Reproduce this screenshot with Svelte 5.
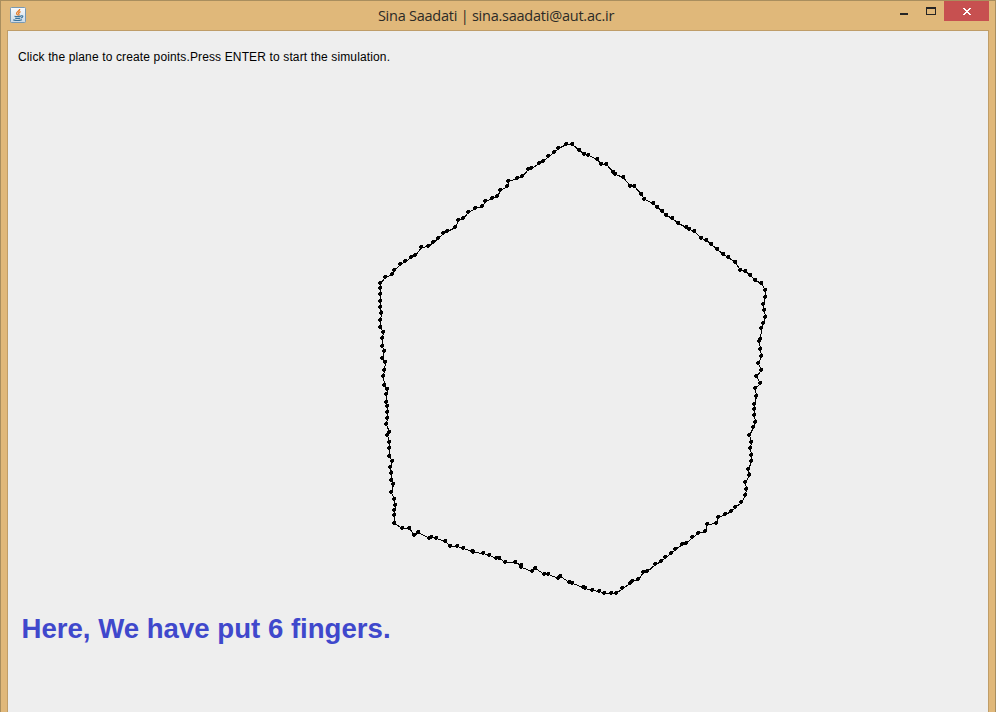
<script>
  const outline = `380,283 385,277 392,274 394,270 400,264 405,261 411,257 415,255 421,247 428,246 433,242 438,238 443,233 447,231 455,227 458,220 463,218 468,212
475,208 482,206 485,201 492,198 497,196 500,190 507,186 508,181 517,178 522,176 528,169 531,168 539,163 543,161 548,156 554,152 558,148 566,144 572,144 579,150 584,154 588,155 597,159 601,164 606,164 613,172 615,174 623,177
630,186 634,186 641,194 644,199 653,203 657,207 662,211 666,215 672,218 678,223 686,227 689,229 694,231 701,238 706,240 711,244 717,249 723,254 728,257 735,262 740,270 745,271 750,275 755,280 761,283 765,290 765,297
763,304 764,310 765,317 763,323 761,328 760,339 759,341 760,349 761,356 758,363 761,370 756,376 760,383 755,388 756,396 754,404 754,409 754,415 755,422 753,427 749,435 751,442 750,448 751,455 751,461 748,469 749,475 745,482 746,489 745,495 741,502 735,507
731,511 725,514 718,517 716,523 707,524 705,531 698,533 692,537 686,543 682,544 675,549 671,553 665,557 661,561 655,564 647,571 643,572 638,579 632,581 630,583 622,588 616,593 611,593 604,593 599,591 592,590 585,588 583,587 572,583 569,582
560,576 558,578 548,574 544,574 535,568 532,571 521,567 521,565 515,562 505,562 499,558 496,558 489,555 483,553 473,552 472,551 463,548 457,546 450,546 445,541 436,538 431,537 429,538 418,532 414,535 409,528 402,528
394,523 394,515 394,510 395,505 394,499 391,492 393,484 391,480 391,473 390,467 392,461 389,456 389,448 389,442 387,435 389,432 386,424 387,418 387,412 387,406 386,402 386,394 387,389 384,385 383,376 384,370 385,362 382,358 384,351 382,346 382,338 383,332 380,327 380,320 381,313 380,307 380,301 380,294 380,288`;
  const points = outline.trim().split(/\s+/).map((p) => p.split(',').map(Number));
  const line = points.map(([x, y]) => `${x + 0.5},${y + 0.5}`).join(' ');
  // Each marker is a 4px disc with clipped corners.
  const dots = points.map(([x, y]) => `M${x - 1} ${y - 2}h3v3h-1v1h-2v-1h-1v-2h1z`).join('');
</script>

<div class="window">
  <header>
    <svg class="java" width="16" height="16" viewBox="0 0 16 16">
      <defs>
        <linearGradient id="tile" x1="0" y1="0" x2="0" y2="1">
          <stop offset="0" stop-color="#fafbfc" />
          <stop offset="1" stop-color="#cbd9e5" />
        </linearGradient>
      </defs>
      <rect x=".5" y=".5" width="15" height="15" rx="1" fill="url(#tile)" stroke="#7899b3" />
      <path d="M9.7 2C10 4 6.4 4.5 6.6 6.4Q6.7 7.2 7.7 8.2M10.6 4.6C8.5 5.6 8.2 6.2 9 7.1Q9.3 7.8 8.5 8.6" fill="none" stroke="#e77922" stroke-width="1.3" />
      <path d="M4.5 9.2Q7 10 11 9.2M5.2 11.1Q7.5 11.9 10.2 11.1M3.3 12.9Q7.5 14.2 12 12.7M11 8.8Q13.7 8.4 12.4 10.1Q11.8 10.8 10.8 11" fill="none" stroke="#39739c" stroke-width="1.2" />
    </svg>
    <h1>Sina Saadati | sina.saadati@aut.ac.ir</h1>
    <div class="controls">
      <svg width="64" height="20" viewBox="0 0 64 20" shape-rendering="crispEdges">
        <path d="M20 12h8v2h-8z" fill="#252525" />
        <path fill-rule="evenodd" d="M46 6h10v8H46zM47 8v5h8V8z" fill="#252525" />
      </svg>
      <button aria-label="Close">
        <svg width="8" height="7" viewBox="0 0 8 7" shape-rendering="crispEdges">
          <path d="M0 0h2v1h1v1h2V1h1V0h2v1H7v1H6v1H5v1h1v1h1v1h1v1H6V6H5V5H3v1H2v1H0V6h1V5h1V4h1V3H2V2H1V1H0z" fill="#fff" />
        </svg>
      </button>
    </div>
  </header>
  <main>
    <p class="hint">Click the plane to create points.Press ENTER to start the simulation.</p>
    <svg class="plane" width="980" height="681" viewBox="8 31 980 681" shape-rendering="crispEdges">
      <polygon points={line} fill="none" stroke="#000" stroke-width="1" />
      <path d={dots} fill="#000" />
    </svg>
    <p class="caption">Here, We have put 6 fingers.</p>
  </main>
</div>

<style>
  :global(body) { margin: 0; overflow: hidden; }
  .window {
    box-sizing: border-box;
    width: 996px;
    height: 712px;
    display: flex;
    flex-direction: column;
    background: #e0b87a;
    border: 1px solid #a98e5e;
    border-bottom: 0;
    padding: 0 6px;
  }
  header {
    height: 29px;
    flex: none;
    display: grid;
    grid-template-columns: 110px 1fr 114px;
    align-items: start;
  }
  .java { margin: 6px 0 0 3px; display: block; }
  h1 {
    margin: 4px 0 0;
    font: 400 14.5px/22px "Open Sans", "Noto Sans", sans-serif;
    color: #2b2a27;
    text-align: center;
    white-space: nowrap;
    letter-spacing: -0.24px;
  }
  .controls { display: flex; justify-content: flex-end; }
  button {
    width: 45px;
    height: 20px;
    border: 0;
    padding: 1px 0 0 1px;
    background: #c75050;
    display: flex;
    align-items: center;
    justify-content: center;
  }
  main {
    flex: 1;
    display: grid;
    background: #eee;
    border: 1px solid #bf9d68;
    border-bottom: 0;
    min-height: 0;
  }
  main > * { grid-area: 1 / 1; margin: 0; }
  .plane { display: block; }
  .hint {
    padding: 18px 0 0 10px;
    font: 12px/16px "Liberation Sans", Arial, sans-serif;
    color: #000;
    letter-spacing: 0.135px;
  }
  .caption {
    padding: 582px 0 0 13.5px;
    font: bold 27.6px/32px "Liberation Sans", Arial, sans-serif;
    color: #3f48cc;
  }
</style>
